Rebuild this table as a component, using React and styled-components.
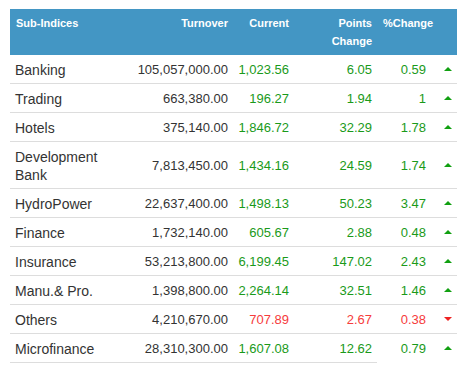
import React from 'react';
import styled, { createGlobalStyle } from 'styled-components';

const GlobalStyle = createGlobalStyle`
  body {
    margin: 0;
    background: #fff;
    font-family: 'Liberation Sans', Arial, sans-serif;
  }
`;

const Wrapper = styled.div`
  padding: 9px 10px;
`;

const Table = styled.table`
  width: 447px;
  border-collapse: collapse;
  table-layout: fixed;
`;

const HeadRow = styled.tr`
  background-color: #4396c4;
`;

const Th = styled.th`
  color: #fff;
  font-size: 11px;
  font-weight: bold;
  line-height: 18px;
  padding: 5px 5px 5px ${(p) => (p.$align === 'left' ? '6px' : '5px')};
  text-align: ${(p) => p.$align || 'right'};
  vertical-align: top;
  white-space: nowrap;
`;

const Td = styled.td`
  font-size: ${(p) => (p.$name ? '14px' : '13px')};
  line-height: 18px;
  padding: 6px ${(p) => p.$padRight || 5}px 4px 5px;
  text-align: ${(p) => (p.$name ? 'left' : 'right')};
  color: ${(p) => (p.$tone === 'up' ? '#1a9a1a' : p.$tone === 'down' ? '#f63c3c' : '#333')};
  border-bottom: 1px solid ${(p) => (p.$noLine ? 'transparent' : '#dddddd')};
  vertical-align: middle;
`;

const ArrowCell = styled(Td)`
  text-align: center;
  padding: 0;
`;

const Arrow = styled.span`
  display: inline-block;
  width: 0;
  height: 0;
  border-left: 4px solid transparent;
  border-right: 4px solid transparent;
  ${(p) =>
    p.$down
      ? 'border-top: 4px solid #ee2222;'
      : 'border-bottom: 4px solid #11a011;'}
  vertical-align: middle;
  position: relative;
  top: -1px;
`;

const rows = [
  ['Banking', '105,057,000.00', '1,023.56', '6.05', '0.59', 'up'],
  ['Trading', '663,380.00', '196.27', '1.94', '1', 'up'],
  ['Hotels', '375,140.00', '1,846.72', '32.29', '1.78', 'up'],
  ['Development Bank', '7,813,450.00', '1,434.16', '24.59', '1.74', 'up'],
  ['HydroPower', '22,637,400.00', '1,498.13', '50.23', '3.47', 'up'],
  ['Finance', '1,732,140.00', '605.67', '2.88', '0.48', 'up'],
  ['Insurance', '53,213,800.00', '6,199.45', '147.02', '2.43', 'up'],
  ['Manu.& Pro.', '1,398,800.00', '2,264.14', '32.51', '1.46', 'up'],
  ['Others', '4,210,670.00', '707.89', '2.67', '0.38', 'down'],
  ['Microfinance', '28,310,300.00', '1,607.08', '12.62', '0.79', 'up'],
];

export default function App() {
  return (
    <Wrapper>
      <GlobalStyle />
      <Table>
        <colgroup>
          <col style={{ width: 108 }} />
          <col style={{ width: 115 }} />
          <col style={{ width: 61 }} />
          <col style={{ width: 83 }} />
          <col style={{ width: 61 }} />
          <col style={{ width: 19 }} />
        </colgroup>
        <thead>
          <HeadRow>
            <Th $align="left">Sub-Indices</Th>
            <Th>Turnover</Th>
            <Th>Current</Th>
            <Th>
              Points
              <br />
              Change
            </Th>
            <Th $align="left">%Change</Th>
            <Th />
          </HeadRow>
        </thead>
        <tbody>
          {rows.map(([name, turnover, current, points, pct, dir], i) => {
            const last = i === rows.length - 1;
            return (
              <tr key={name}>
                <Td $name>{name}</Td>
                <Td>{turnover}</Td>
                <Td $tone={dir}>{current}</Td>
                <Td $tone={dir}>{points}</Td>
                <Td $tone={dir} $padRight={12} $noLine={last}>
                  {pct}
                </Td>
                <ArrowCell $noLine={last}>
                  <Arrow $down={dir === 'down'} />
                </ArrowCell>
              </tr>
            );
          })}
        </tbody>
      </Table>
    </Wrapper>
  );
}
